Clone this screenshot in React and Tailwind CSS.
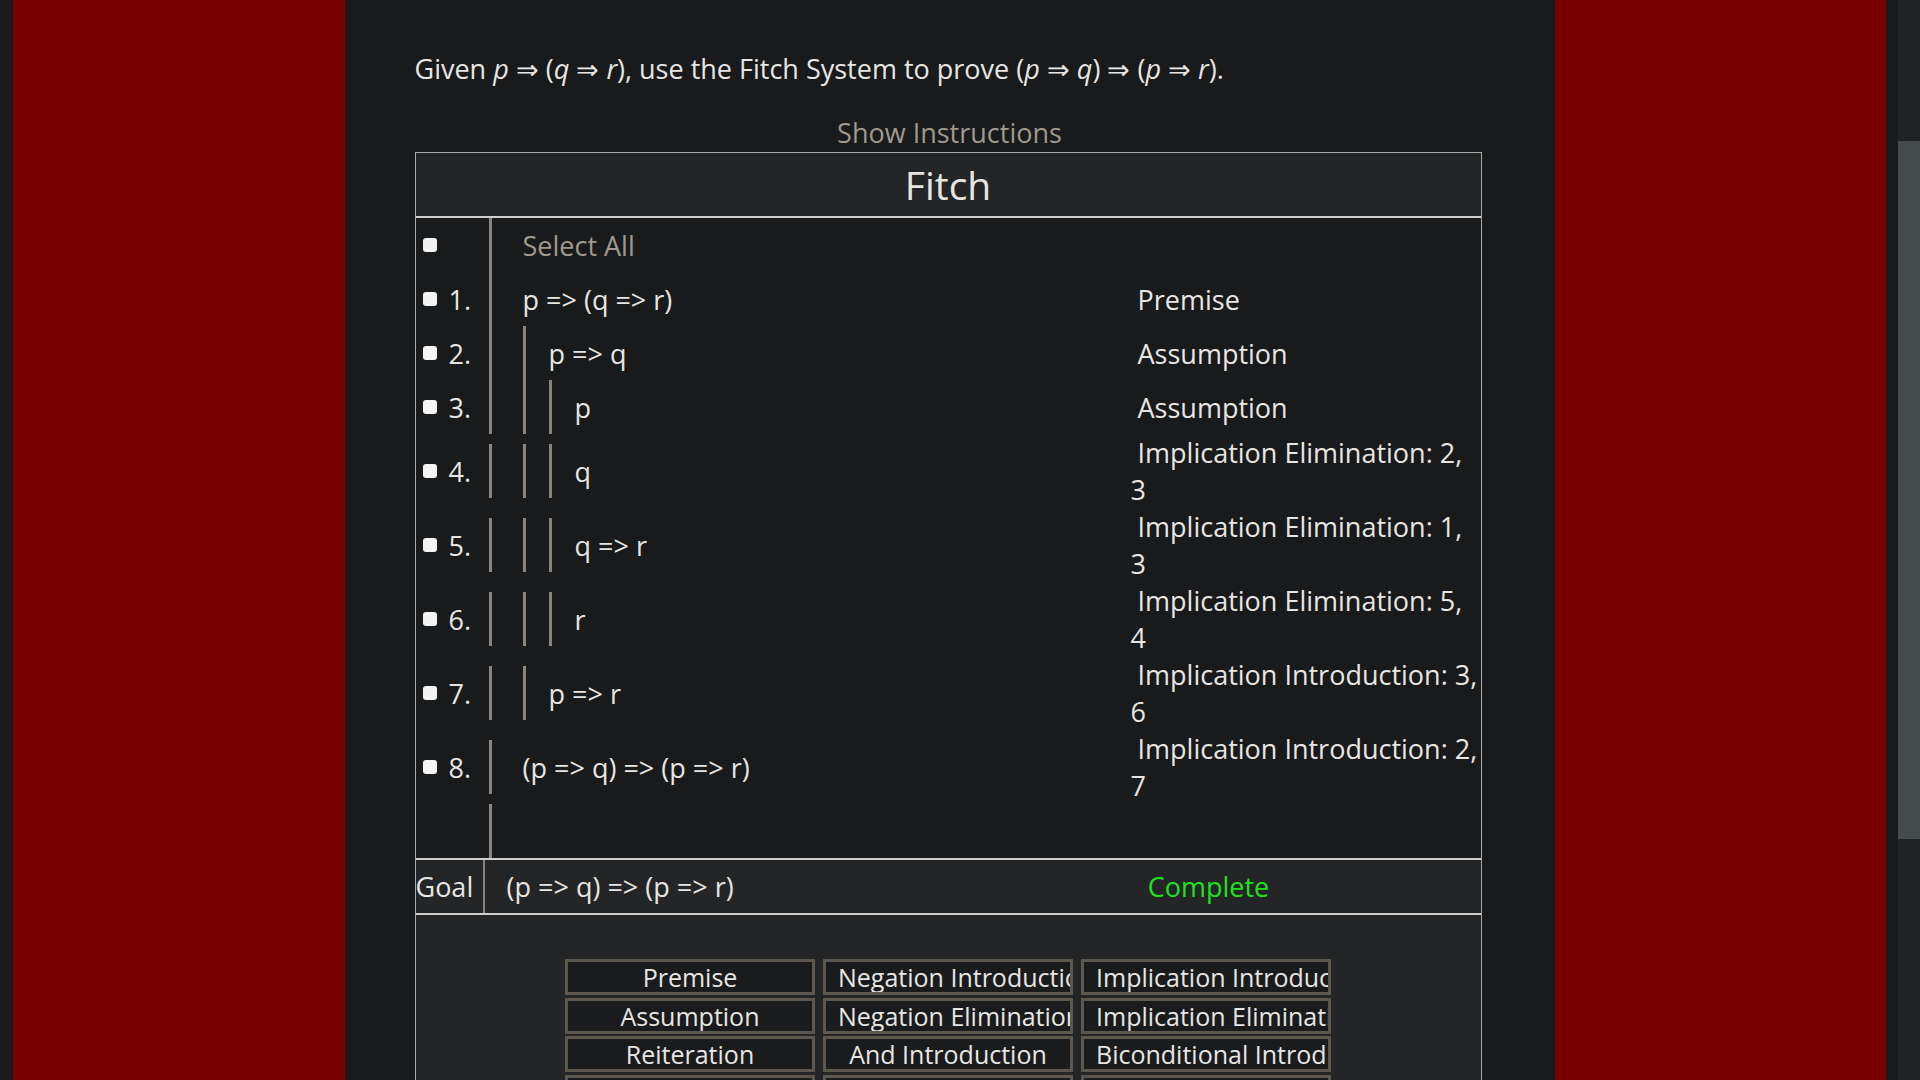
const rows = [
  { n: "1.", bars: 1, f: "p => (q => r)", j: ["Premise"] },
  { n: "2.", bars: 2, f: "p => q", j: ["Assumption"] },
  { n: "3.", bars: 3, f: "p", j: ["Assumption"] },
  { n: "4.", bars: 3, f: "q", j: ["Implication Elimination: 2,", "3"] },
  { n: "5.", bars: 3, f: "q => r", j: ["Implication Elimination: 1,", "3"] },
  { n: "6.", bars: 3, f: "r", j: ["Implication Elimination: 5,", "4"] },
  { n: "7.", bars: 2, f: "p => r", j: ["Implication Introduction: 3,", "6"] },
  { n: "8.", bars: 1, f: "(p => q) => (p => r)", j: ["Implication Introduction: 2,", "7"] },
];

const rules = [
  "Premise", "Negation Introduction", "Implication Introduction",
  "Assumption", "Negation Elimination", "Implication Elimination",
  "Reiteration", "And Introduction", "Biconditional Introduction",
  "Or Introduction", "And Elimination", "Biconditional Elimination",
];

function Box() {
  return <div className="w-[14px] h-[14px] bg-[#f4f4f4] rounded-[3px] shrink-0" />;
}

function Bars({ count, children, gray }) {
  const list = [];
  for (let i = 0; i < count; i++) {
    list.push(
      <div
        key={i}
        className={"w-[3px] h-[54px] bg-[#8b847a] shrink-0 " + (i === 0 ? "" : i === 1 ? "ml-[31px]" : "ml-[23px]")}
      />
    );
  }
  return (
    <div className="w-[642px] flex items-center shrink-0">
      {list}
      {children != null && (
        <span className={(count === 1 ? "ml-[31px] " : "ml-[23px] ") + (gray ? "text-[#a0998e]" : "")}>
          {children}
        </span>
      )}
    </div>
  );
}

function ProofRow({ row }) {
  return (
    <div className="flex items-center min-h-[54px]">
      <div className="w-[73px] flex items-center shrink-0">
        <div className="ml-[7px]">
          <Box />
        </div>
        <span className="ml-[12px]">{row.n}</span>
      </div>
      <Bars count={row.bars}>{row.f}</Bars>
      <div className="w-[350px] leading-[37px]">
        <div>{"\u00a0" + row.j[0]}</div>
        {row.j[1] && <div>{row.j[1]}</div>}
      </div>
    </div>
  );
}

export default function App() {
  return (
    <div className="h-[1080px] overflow-hidden flex bg-[#181a1b] text-[#e8e6e3] font-['Open_Sans',sans-serif] text-[27px] leading-[37px]">
      <div className="w-[13px] shrink-0" />
      <div className="flex-1 bg-[#7a0000] flex justify-center">
        <div className="w-[1210px] bg-[#181a1b] flex flex-col">
          <p className="mt-[50px] pl-[70px]">
            Given <i>p</i> ⇒ (<i>q</i> ⇒ <i>r</i>), use the Fitch System to prove (<i>p</i> ⇒ <i>q</i>) ⇒ (<i>p</i> ⇒ <i>r</i>).
          </p>
          <div className="mt-[27px] text-center text-[#a0998e]">Show Instructions</div>

          <div className="mt-[1px] w-[1067px] ml-[70px] flex-1 border-x border-t border-[#a9a9a9] flex flex-col">
            <div className="h-[65px] bg-[#232527] flex items-center justify-center text-[39px] border-b-2 border-[#cfcfcf]">
              Fitch
            </div>

            <div className="flex items-center h-[54px]">
              <div className="w-[73px] flex items-center shrink-0">
                <div className="ml-[7px]">
                  <Box />
                </div>
              </div>
              <Bars count={1} gray>Select All</Bars>
            </div>

            {rows.map((r) => (
              <ProofRow key={r.n} row={r} />
            ))}

            <div className="flex items-center h-[54px]">
              <div className="w-[73px] shrink-0" />
              <Bars count={1} />
            </div>

            <div className="flex h-[57px] bg-[#232527] border-y-2 border-[#cfcfcf] items-stretch">
              <div className="w-[67px] flex items-center shrink-0">Goal</div>
              <div className="w-[2px] bg-[#8b847a] shrink-0" />
              <div className="w-[452px] pl-[22px] flex items-center shrink-0">(p =&gt; q) =&gt; (p =&gt; r)</div>
              <div className="flex-1 flex items-center justify-center text-[#1fe21f]">Complete</div>
            </div>

            <div className="flex-1 bg-[#232527] pt-[44px]">
              <div className="w-fit mx-auto grid grid-cols-[250px_250px_250px] gap-x-[8px] gap-y-[2.5px]">
                {rules.map((t) => (
                  <div
                    key={t}
                    className="h-[36px] border-[3px] border-[#5e574f] bg-[#1a1b1d] px-[12px] text-[25px] leading-[30px] text-center whitespace-nowrap overflow-hidden"
                  >
                    {t}
                  </div>
                ))}
              </div>
            </div>
          </div>
        </div>
      </div>
      <div className="w-[12px] shrink-0" />
      <div className="w-[22px] shrink-0 bg-[#202324] flex flex-col">
        <div className="mt-[141px] h-[698px] bg-[#454a4d]" />
      </div>
    </div>
  );
}
